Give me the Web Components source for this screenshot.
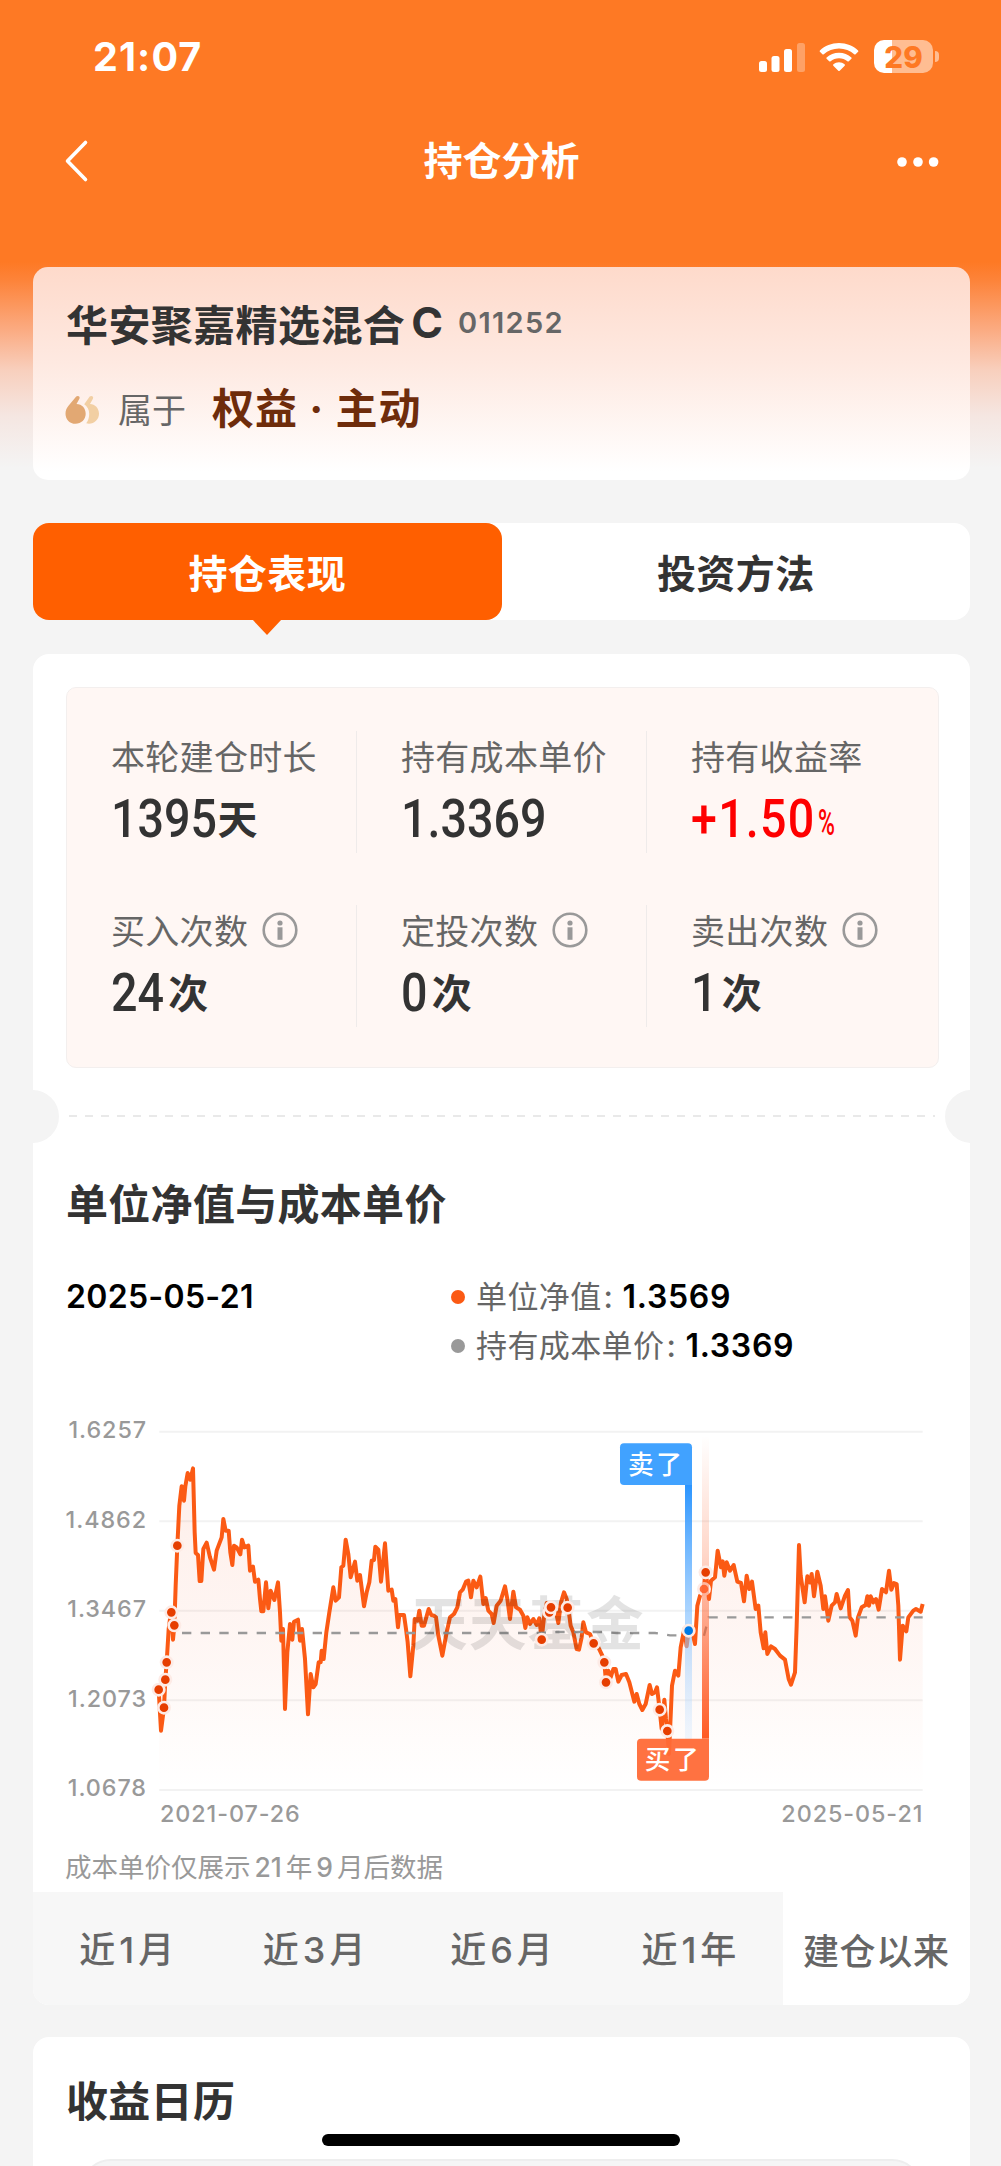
<!DOCTYPE html>
<html lang="zh-CN">
<head>
<meta charset="utf-8">
<title>持仓分析</title>
<style>
    body {
        margin: 0;
        width: 1001px;
        height: 2166px;
        overflow: hidden;
        position: relative;
        color: #333;
        font-family: Inter, "Noto Sans CJK SC", sans-serif;
        background: #f4f4f4 linear-gradient(180deg, #fe7924 0, #fe7924 262px, #fd8339 280px, #fbab82 330px, #f8cfbd 370px, #f5e6e1 415px, #f4f4f4 468px) no-repeat;
    }
</style>
</head>
<body>
    <status-bar time="21:07" battery="29"></status-bar>
    <nav-bar>持仓分析</nav-bar>
    <fund-card code="011252">
        <span slot="name">华安聚嘉精选混合</span>
        <span slot="share">C</span>
        <span slot="type">权益 · 主动</span>
    </fund-card>
    <main-tabs>
        <span slot="active">持仓表现</span>
        <span slot="other">投资方法</span>
    </main-tabs>
    <panel-card style="--top: 33px; --height: 1351px">
        <stat-grid>
            <stat-item label="本轮建仓时长" value="1395" unit="天"></stat-item>
            <stat-item label="持有成本单价" value="1.3369"></stat-item>
            <stat-item label="持有收益率" value="+1.50" unit="%" rise></stat-item>
            <stat-item label="买入次数" value="24" unit="次" info></stat-item>
            <stat-item label="定投次数" value="0" unit="次" info></stat-item>
            <stat-item label="卖出次数" value="1" unit="次" info></stat-item>
        </stat-grid>
        <ticket-line></ticket-line>
        <section-title>单位净值与成本单价</section-title>
        <chart-legend date="2025-05-21" nav="1.3569" cost="1.3369"></chart-legend>
        <nav-chart></nav-chart>
        <chart-note>成本单价仅展示<i>21</i>年<i>9</i>月后数据</chart-note>
        <range-bar></range-bar>
    </panel-card>
    <panel-card style="--top: 35px; --height: 200px">
        <section-title>收益日历</section-title>
        <calendar-box></calendar-box>
    </panel-card>
    <home-indicator></home-indicator>

<script>
/** shadow root 공통 생성 */
class BaseElement extends HTMLElement {
    constructor() {
        super();
        this.attachShadow({mode: "open"});
    }

    connectedCallback() {
        this.shadowRoot.innerHTML = this.template();
    }

    attr(name) {
        return this.getAttribute(name) || '';
    }
}

class StatusBar extends BaseElement {
    template() {
        return `
            <div class="time">${this.attr('time')}</div>
            <svg width="52" height="36" viewBox="0 0 52 36" fill="#fff">
                <rect x="2" y="22" width="8" height="11" rx="2.5"/>
                <rect x="14.5" y="17" width="8" height="16" rx="2.5"/>
                <rect x="27" y="10" width="8" height="23" rx="2.5"/>
                <rect x="40" y="4" width="8" height="29" rx="2.5" opacity=".3"/>
            </svg>
            <svg class="wifi" width="40" height="30" viewBox="0 0 40 30" fill="#fff">
                <path d="M20 1C12.500 1 5.800 3.800 .9 8.400c-.4.4-.4 1 0 1.400l2.500 2.500c.4.4 1 .4 1.400 0C8.900 8.700 14.200 6.600 20 6.600s11.100 2.100 15.200 5.700c.4.4 1 .4 1.400 0l2.500-2.500c.4-.4.4-1 0-1.400C34.200 3.800 27.500 1 20 1z"/>
                <path d="M20 10.700c-4.800 0-9.100 1.700-12.400 4.700-.4.4-.4 1 0 1.400l2.600 2.500c.4.4 1 .4 1.400 0 2.300-2 5.200-3.100 8.400-3.100s6.100 1.100 8.400 3.100c.4.400 1 .4 1.400 0l2.600-2.500c.4-.4.4-1 0-1.400-3.300-3-7.600-4.700-12.400-4.700z"/>
                <path d="M20 20.200c-2.100 0-4.100.8-5.600 2.100-.4.4-.5 1-.1 1.400l5 5.100c.4.400 1 .4 1.400 0l5-5.100c.4-.4.3-1-.1-1.400-1.500-1.300-3.500-2.100-5.600-2.100z"/>
            </svg>
            <div class="battery">${this.attr('battery')}</div>
            <div class="cap"></div>
            <style>
                :host {
                    display: flex;
                    align-items: center;
                    height: 113px;
                    padding-left: 93px;
                    color: #fff;
                }
                .time {
                    flex: none;
                    width: 664px;
                    font-size: 39.500px;
                    font-weight: 700;
                    letter-spacing: 1.100px;
                    line-height: 60px;
                }
                .wifi { margin-left: 10px; }
                .battery {
                    margin-left: 15px;
                    width: 59px;
                    height: 33px;
                    border-radius: 10px;
                    background: linear-gradient(90deg, #fff 18px, #ffbd92 18px);
                    color: #fe7924;
                    font-size: 29.500px;
                    font-weight: 800;
                    line-height: 34px;
                    text-align: center;
                }
                .cap {
                    margin-left: 2px;
                    width: 4px;
                    height: 11px;
                    border-radius: 0 5px 5px 0;
                    background: #ffbd92;
                }
            </style>
        `;
    }
}
customElements.define('status-bar', StatusBar);

class NavBar extends BaseElement {
    template() {
        return `
            <svg width="26" height="44" viewBox="0 0 26 44" fill="none" stroke="#fff" stroke-width="3.600" stroke-linecap="round" stroke-linejoin="round">
                <path d="M22.500 3.500 4.500 22l18 18.500"/>
            </svg>
            <slot></slot>
            <svg class="more" width="44" height="12" viewBox="0 0 44 12" fill="#fff">
                <circle cx="6" cy="6" r="4.800"/><circle cx="22" cy="6" r="4.800"/><circle cx="37.600" cy="6" r="4.800"/>
            </svg>
            <style>
                :host {
                    display: flex;
                    align-items: center;
                    justify-content: space-between;
                    height: 96px;
                    margin-bottom: 58px;
                    padding: 0 61px 0 63px;
                    color: #fff;
                    font-size: 39px;
                    font-weight: 700;
                    line-height: 60px;
                }
                svg.more { margin: 2px 0 0 -18px; }
            </style>
        `;
    }
}
customElements.define('nav-bar', NavBar);

class FundCard extends BaseElement {
    template() {
        return `
            <div class="row">
                <span class="name"><slot name="name"></slot></span>
                <span class="share"><slot name="share"></slot></span>
                <span class="code">${this.attr('code')}</span>
            </div>
            <div class="row second">
                <svg width="36" height="30" viewBox="0 0 36 30">
                    <path fill="#f2cfa3" d="M24.700 1.500c2-1.500 4.300.3 3.200 2.200L25 9c5 0 9 4.300 9 9.800s-4.500 10-10 10c-1 0-2-.2-2.800-.5 2-2.500 3-5.500 3-9.500 0-4-2-7.500-5-9.500z"/>
                    <path fill="#e2a873" d="M11.200 1.500c2-1.500 4.300.3 3.200 2.200L11.500 9c5.500 0 9.200 4.300 9.200 9.800 0 5.700-4.500 10-10.200 10S.5 24.500.5 18.700c0-3 1-5.400 2.800-7.700z"/>
                </svg>
                <span class="belong">属于</span>
                <span class="type"><slot name="type"></slot></span>
            </div>
            <style>
                :host {
                    display: block;
                    box-sizing: border-box;
                    width: 937px;
                    height: 213px;
                    margin-left: 33px;
                    padding: 25px 33px 0;
                    border-radius: 15px;
                    background: linear-gradient(180deg, #fedacb, #fee9e1 45%, #fff 96%);
                }
                .row {
                    display: flex;
                    align-items: center;
                    height: 60px;
                    white-space: pre;
                }
                .second { margin-top: 23px; }
                .name { font-size: 42px; font-weight: 700; letter-spacing: .4px; }
                .share { font-size: 43px; font-weight: 700; margin-left: 6px; }
                .code { font-size: 29px; font-weight: 600; color: #666; margin: 1px 0 0 15px; letter-spacing: 1.300px; }
                svg { margin: 9px 0 0 -1px; }
                .belong { font-size: 34px; color: #666; margin: 6px 0 0 17px; }
                .type { font-size: 42px; font-weight: 700; color: #6e2c0b; margin-left: 26px; letter-spacing: 1.100px; }
            </style>
        `;
    }
}
customElements.define('fund-card', FundCard);

class MainTabs extends BaseElement {
    template() {
        return `
            <div class="tab active"><slot name="active"></slot></div>
            <div class="tab"><slot name="other"></slot></div>
            <style>
                :host {
                    display: flex;
                    width: 937px;
                    height: 97px;
                    margin: 43px 0 34px 33px;
                    border-radius: 16px;
                    background: #fff;
                }
                .tab {
                    position: relative;
                    flex: 1;
                    text-align: center;
                    font-size: 39px;
                    font-weight: 700;
                    letter-spacing: .4px;
                    line-height: 101px;
                }
                .active {
                    color: #fff;
                    background: #ff5f00;
                    border-radius: 16px;
                }
                /* 선택된 탭 아래 화살표 */
                .active:after {
                    content: "";
                    position: absolute;
                    top: 96px;
                    left: 219px;
                    border: 15px solid transparent;
                    border-top: 16px solid #ff5f00;
                    border-bottom: 0;
                }
            </style>
        `;
    }
}
customElements.define('main-tabs', MainTabs);

class PanelCard extends BaseElement {
    template() {
        return `
            <slot></slot>
            <style>
                :host {
                    display: block;
                    box-sizing: border-box;
                    width: 937px;
                    height: var(--height);
                    margin: 0 0 32px 33px;
                    padding-top: var(--top);
                    border-radius: 16px;
                    background: #fff;
                    overflow: hidden;
                }
            </style>
        `;
    }
}
customElements.define('panel-card', PanelCard);

class StatGrid extends BaseElement {
    template() {
        return `
            <slot></slot>
            <style>
                :host {
                    display: grid;
                    grid-template-columns: 290px 290px 1fr;
                    grid-template-rows: 122px 122px;
                    row-gap: 52px;
                    box-sizing: border-box;
                    width: 873px;
                    height: 381px;
                    margin-left: 33px;
                    padding-top: 43px;
                    border: 1.500px solid #f3efee;
                    border-radius: 10px;
                    background: #fff7f4;
                }
            </style>
        `;
    }
}
customElements.define('stat-grid', StatGrid);

class StatItem extends BaseElement {
    template() {
        const info = `
            <svg width="36" height="36" viewBox="0 0 36 36" fill="#999">
                <circle cx="18" cy="18" r="16.300" fill="none" stroke="#999" stroke-width="2.600"/>
                <circle cx="18" cy="11" r="2.600"/><rect x="15.500" y="15.300" width="5" height="12.500"/>
            </svg>`;
        const percent = this.attr('unit') === '%';
        return `
            <div class="label">${this.attr('label')}${this.hasAttribute('info') ? info : ''}</div>
            <div class="value"><span class="num">${this.attr('value')}</span><span class="${percent ? 'percent' : 'unit'}">${this.attr('unit')}</span></div>
            <style>
                :host {
                    display: block;
                    padding-left: 44px;
                    border-right: 1.500px solid #efebea;
                }
                :host(:nth-child(3n)) { border-right: 0; }
                .label {
                    display: flex;
                    align-items: center;
                    height: 54px;
                    margin-top: -3px;
                    color: #666;
                    font-size: 34px;
                    letter-spacing: .3px;
                }
                .label svg { margin: 2px 0 0 14px; }
                .value {
                    display: flex;
                    height: 68px;
                    margin-top: 3px;
                    line-height: 68px;
                    font-weight: 700;
                }
                .num {
                    font-family: Roboto, sans-serif;
                    font-size: 53px;
                    font-weight: 500;
                    display: inline-block;
                    transform: scaleX(.88);
                    transform-origin: left;
                    margin-right: calc(var(--len) * -3.5px);
                }
                .unit { font-size: 40px; line-height: 69px; }
                :host([info]) .unit { margin-left: 4px; }
                .percent {
                    font-family: Roboto, sans-serif;
                    font-size: 36px;
                    font-weight: 500;
                    line-height: 76px;
                    margin-left: 3px;
                    transform: scaleX(.64);
                    transform-origin: left;
                }
                :host([rise]) .value { color: #fe0000; }
                :host([rise]) .num { letter-spacing: 1.400px; }
            </style>
        `;
    }

    connectedCallback() {
        this.style.setProperty('--len', this.attr('value').length);
        super.connectedCallback();
    }
}
customElements.define('stat-item', StatItem);

class TicketLine extends BaseElement {
    template() {
        return `
            <i></i><div></div><i></i>
            <style>
                :host {
                    display: flex;
                    align-items: center;
                    justify-content: space-between;
                    height: 54px;
                    margin: 21px -28px 32px -27px;
                }
                i {
                    width: 53px;
                    height: 53px;
                    border-radius: 50%;
                    background: #f4f4f4;
                }
                div {
                    width: 866px;
                    height: 2px;
                    background: repeating-linear-gradient(90deg, #e9e9e9 0 8px, transparent 8px 16px);
                }
            </style>
        `;
    }
}
customElements.define('ticket-line', TicketLine);

class SectionTitle extends BaseElement {
    template() {
        return `
            <slot></slot>
            <style>
                :host {
                    display: block;
                    padding-left: 33px;
                    font-size: 42px;
                    font-weight: 700;
                    line-height: 60px;
                    letter-spacing: .3px;
                    height: 60px;
                }
            </style>
        `;
    }
}
customElements.define('section-title', SectionTitle);

class ChartLegend extends BaseElement {
    template() {
        return `
            <b class="date">${this.attr('date')}</b>
            <div>
                <p><i></i>单位净值<em>:</em><b>${this.attr('nav')}</b></p>
                <p><i class="cost"></i>持有成本单价<em>:</em><b>${this.attr('cost')}</b></p>
            </div>
            <style>
                :host {
                    display: flex;
                    height: 98px;
                    margin: 37px 0 29px 33px;
                    font-size: 31px;
                    line-height: 49px;
                }
                p {
                    display: flex;
                    align-items: center;
                    margin: 0;
                    color: #666;
                    letter-spacing: .4px;
                }
                b { color: #000; font-weight: 600; font-size: 32px; letter-spacing: .7px; }
                em { font-style: normal; font-weight: 500; width: 19px; margin-left: 2px; }
                .date { width: 385px; letter-spacing: .3px; }
                i {
                    width: 14px;
                    height: 14px;
                    margin-right: 11px;
                    border-radius: 50%;
                    background: #fb5a14;
                }
                .cost { background: #999; }
            </style>
        `;
    }
}
customElements.define('chart-legend', ChartLegend);

/** 단위 순자산 추이. 좌표는 1/3px 단위 */
const NAV_POINTS = [
    326,872, 333,995, 342,926, 346,842, 350,790, 356,690, 360,660, 364,640, 369,722, 373,679, 377,560, 382,440,
    388,320, 395,262, 402,305, 406,262, 413,222, 421,242, 429,208, 434,400, 437,462, 444,468, 449,546, 454,546,
    460,450, 470,431, 480,475, 492,512, 500,455, 515,415, 520,360, 527,395, 536,395, 541,460, 547,498, 552,440,
    560,445, 571,466, 576,422, 583,445, 595,440, 600,515, 609,503, 615,548, 625,542, 630,600, 634,637, 640,637,
    648,550, 655,628, 662,575, 673,603, 684,550, 690,640, 694,725, 699,690, 705,930, 712,760, 720,675, 727,722,
    732,668, 744,662, 750,725, 756,690, 765,780, 774,946, 782,825, 790,865, 797,855, 806,790, 812,790, 815,755,
    821,780, 829,700, 838,640, 850,565, 857,605, 867,595, 874,505, 880,500, 887,422, 895,465, 902,535, 915,488,
    922,545, 930,528, 942,622, 950,580, 958,550, 965,485, 972,483, 976,443, 985,452, 993,548, 1005,433, 1015,575,
    1025,572, 1030,605, 1036,600, 1044,685, 1048,648, 1062,648, 1068,690, 1073,730, 1081,832, 1090,740, 1094,660,
    1103,665, 1108,635, 1115,680, 1122,680, 1129,655, 1136,630, 1144,648, 1152,650, 1158,655, 1165,710, 1177,770,
    1190,700, 1200,655, 1212,645, 1222,625, 1230,580, 1238,572, 1248,548, 1255,545, 1263,595, 1270,545, 1280,565,
    1291,533, 1300,615, 1307,597, 1315,635, 1325,645, 1331,672, 1340,620, 1352,605, 1365,562, 1372,600, 1380,660,
    1390,578, 1398,625, 1410,632, 1420,650, 1426,687, 1432,655, 1440,675, 1450,660, 1460,678, 1468,658, 1475,722,
    1482,655, 1490,612, 1498,640, 1503,625, 1510,630, 1518,640, 1525,672, 1533,610, 1542,580, 1550,600, 1555,628,
    1562,680, 1570,700, 1580,750, 1587,752, 1595,715, 1600,670, 1608,700, 1620,705, 1631,733, 1645,745, 1657,770,
    1663,790, 1668,850, 1675,815, 1682,835, 1690,810, 1697,810, 1705,848, 1715,828, 1728,825, 1738,850, 1753,908,
    1760,885, 1768,915, 1777,933, 1787,915, 1799,858, 1806,885, 1815,880, 1821,865, 1829,932, 1835,990, 1843,902,
    1848,960, 1852,996, 1857,1065, 1866,860, 1875,815, 1885,830, 1892,745, 1903,690, 1910,742, 1916,695, 1927,700,
    1935,735, 1942,620, 1950,590, 1962,570, 1967,520, 1977,600, 1983,545, 1995,535, 2003,455, 2013,505, 2018,487,
    2023,530, 2030,490, 2040,515, 2051,498, 2062,548, 2073,552, 2082,607, 2090,530, 2098,570, 2106,548, 2117,630,
    2125,620, 2132,700, 2141,748, 2146,700, 2152,765, 2163,742, 2175,750, 2190,770, 2205,782, 2216,840, 2223,857,
    2235,820, 2240,680, 2247,438, 2252,530, 2264,610, 2272,532, 2280,550, 2285,525, 2292,592, 2302,518, 2312,560,
    2320,630, 2325,592, 2335,665, 2345,620, 2355,610, 2360,585, 2372,628, 2385,590, 2394,573, 2399,655, 2407,665,
    2417,710, 2424,655, 2435,625, 2447,618, 2452,592, 2457,620, 2462,592, 2470,610, 2478,600, 2486,632, 2496,570,
    2508,580, 2517,515, 2524,572, 2532,552, 2540,555, 2545,620, 2550,782, 2558,680, 2569,697, 2575,655, 2590,635,
    2598,630, 2612,638, 2618,615
];

const BUY_POINTS = [
    [326,872], [342,926], [346,842], [350,790], [364,640], [373,679], [382,440], [1475,722], [1498,640], [1503,625],
    [1553,626], [1631,733], [1663,790], [1668,850], [1829,932], [1852,996], [1967,520]
];

class NavChart extends BaseElement {
    dot(x, y, color = '#e63e00') {
        return `<circle cx="${x}" cy="${y}" r="17" fill="${color}" stroke="#fdebe6" stroke-width="8"/>`;
    }

    template() {
        const rows = ['1.6257', '1.4862', '1.3467', '1.2073', '1.0678'];
        const grid = rows.map((text, i) => {
            const y = 98 + i * 268.7;
            return `<path d="M328 ${y}H2618" stroke="#f2f2f2" stroke-width="6"/>
                <text x="291" y="${y + 19}" text-anchor="end">${text}</text>`;
        }).join('');

        return `
            <svg width="901" height="444" viewBox="0 0 2703 1332">
                <defs>
                    <linearGradient id="area" x1="0" y1="200" x2="0" y2="1172" gradientUnits="userSpaceOnUse">
                        <stop offset="0" stop-color="#f4511e" stop-opacity=".1"/>
                        <stop offset=".6" stop-color="#f4511e" stop-opacity=".045"/>
                        <stop offset="1" stop-color="#f4511e" stop-opacity="0"/>
                    </linearGradient>
                    <linearGradient id="sell" x1="0" y1="0" x2="0" y2="1">
                        <stop offset="0" stop-color="#2b95ff"/>
                        <stop offset="1" stop-color="#cfe6ff" stop-opacity=".3"/>
                    </linearGradient>
                    <linearGradient id="buy" x1="0" y1="0" x2="0" y2="1">
                        <stop offset="0" stop-color="#ff5a23" stop-opacity="0"/>
                        <stop offset=".4" stop-color="#ff5a23" stop-opacity=".25"/>
                        <stop offset="1" stop-color="#ff5a23"/>
                    </linearGradient>
                </defs>
                <g class="axis">
                    ${grid}
                    <text x="330" y="1269">2021-07-26</text>
                    <text x="2620" y="1269" text-anchor="end">2025-05-21</text>
                </g>
                <polygon points="328,1172 ${NAV_POINTS.join(' ')} 2618,1172" fill="url(#area)"/>
                <polyline points="${NAV_POINTS.join(' ')}" fill="none" stroke="#fb5a14" stroke-width="12" stroke-linejoin="round"/>
                <path d="M396 702H1470L1520 699 1660 699 1700 702H1815L1860 709H1910M1962 710 1976 655H2618" fill="none" stroke="#999" stroke-width="7" stroke-dasharray="28 28"/>
                <text class="mark" x="1080" y="738">天天基金</text>
                ${BUY_POINTS.map(([x, y]) => this.dot(x, y)).join('')}
                ${this.dot(1962, 570, '#ff6e3d')}
                <rect x="1905" y="258" width="21" height="762" fill="url(#sell)"/>
                <rect x="1956" y="110" width="21" height="909" fill="url(#buy)"/>
                <path d="M1722 133H1914q12 0 12 12V258H1722q-12 0-12-12V145q0-12 12-12z" fill="#41a2ff"/>
                <path d="M1773 1019H1977V1133q0 12-12 12H1773q-12 0-12-12V1031q0-12 12-12z" fill="#ff6a37" fill-opacity=".95"/>
                <text class="flag" x="1734" y="225">卖了</text>
                <text class="flag" x="1784" y="1111">买了</text>
                ${this.dot(1967, 520)}
                ${this.dot(1916, 695, '#007ae6')}
            </svg>
            <style>
                :host {
                    display: block;
                    height: 446px;
                    margin-left: 17px;
                }
                svg { display: block; }
                .axis text { font-size: 70px; font-weight: 500; fill: #999; letter-spacing: 2.800px; }
                .flag { font-size: 77px; font-weight: 500; fill: #fff; letter-spacing: 8px; }
                .mark { font-size: 173px; font-weight: 700; fill: #000; fill-opacity: .11; letter-spacing: 3px; }
            </style>
        `;
    }
}
customElements.define('nav-chart', NavChart);

class ChartNote extends BaseElement {
    template() {
        return `
            <slot></slot>
            <style>
                :host {
                    display: block;
                    height: 47px;
                    padding-left: 32px;
                    color: #999;
                    font-size: 26.500px;
                    line-height: 45px;
                }
                ::slotted(i) {
                    font-style: normal;
                    font-weight: 500;
                    margin: 0 4px;
                }
            </style>
        `;
    }
}
customElements.define('chart-note', ChartNote);

class RangeBar extends BaseElement {
    template() {
        return `
            <div>近<i>1</i>月</div>
            <div>近<i>3</i>月</div>
            <div>近<i>6</i>月</div>
            <div>近<i>1</i>年</div>
            <div class="on">建仓以来</div>
            <style>
                :host {
                    display: grid;
                    grid-template-columns: repeat(5, 1fr);
                    height: 115px;
                    background: #f7f7f7;
                    color: #666;
                    font-size: 36px;
                    font-weight: 500;
                    line-height: 117px;
                    text-align: center;
                }
                i { font-style: normal; margin: 0 4px; }
                .on { background: #fff; line-height: 120px; letter-spacing: .7px; }
            </style>
        `;
    }
}
customElements.define('range-bar', RangeBar);

class CalendarBox extends BaseElement {
    template() {
        return `
            <style>
                :host {
                    display: block;
                    box-sizing: border-box;
                    height: 60px;
                    margin: 27px 48px 0;
                    border: 2px solid #eee;
                    border-radius: 30px;
                    background: #f5f5f5;
                }
            </style>
        `;
    }
}
customElements.define('calendar-box', CalendarBox);

class HomeIndicator extends BaseElement {
    template() {
        return `
            <style>
                :host {
                    position: absolute;
                    left: 322px;
                    top: 2134px;
                    width: 358px;
                    height: 12px;
                    border-radius: 6px;
                    background: #000;
                }
            </style>
        `;
    }
}
customElements.define('home-indicator', HomeIndicator);
</script>
</body>
</html>
